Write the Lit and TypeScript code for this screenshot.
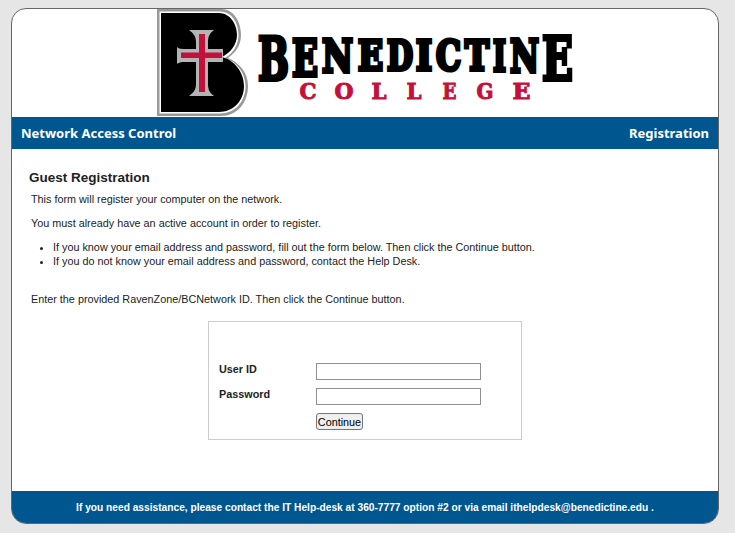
import { LitElement, html, css, svg } from "lit";
import { customElement } from "lit/decorators.js";

const BIG: [string, number, number, number, number][] = [
  ["B", 258, 33, 35, 82],
  ["E", 292, 28, 37, 78],
  ["N", 322, 33, 37, 74],
  ["E", 358, 27, 38, 72],
  ["D", 387, 28, 38, 72],
  ["I", 416, 18, 38, 72],
  ["C", 436, 27, 38, 72],
  ["T", 465, 26, 38, 72],
  ["I", 493, 15, 38, 73],
  ["N", 510, 31, 37, 74],
  ["E", 542, 33, 34, 82],
];
const SMALL: [string, number, number][] = [
  ["C", 300, 18],
  ["O", 335, 20],
  ["L", 372, 16],
  ["L", 407, 16],
  ["E", 443, 15],
  ["G", 477, 18],
  ["E", 513, 19],
];
const CAP = 0.729;

const bPath =
  "M158 9H222C235 9 242 22 242 35C242 46 236 53 229 58C241 63 249 73 249 86C249 103 238 116 222 116H158Z";
const bInner =
  "M160.500 11.500H221C233 11.500 239.500 23 239.500 35C239.500 46 233 54 226 58C238 62 246.500 73 246.500 86C246.500 102 236 113.500 221 113.500H160.500Z";
const bBlack =
  "M162 13H220C231 13 238 24 238 35C238 45 231 53 223 57C235 60 245 72 245 86C245 101 234 112 220 112H162Z";
const cross =
  "M190 30H215C211 33 209 36 209 42V49H224V62H209V84C209 90 211 93 215 96H190C194 93 197 90 197 84V62H184C181 62 179 63 178 64V47C179 48 181 49 184 49H197V42C197 36 194 33 190 30Z";

@customElement("app-root")
export class AppRoot extends LitElement {
  static styles = css`
    :host {
      display: block;
      height: 533px;
      box-sizing: border-box;
      padding: 8px 16px 9px 11px;
      background: #e6e6e6;
      font-family: "Liberation Sans", Arial, sans-serif;
      font-size: 10.820px;
      color: #222;
    }
    .card {
      height: 100%;
      box-sizing: border-box;
      display: flex;
      flex-direction: column;
      background: #fff;
      border: 1px solid #666;
      border-radius: 15px;
      overflow: hidden;
    }
    .logo {
      height: 108px;
      display: flex;
      justify-content: center;
      flex: none;
    }
    .logo svg {
      display: block;
    }
    .bar {
      flex: none;
      height: 32px;
      background: #00568f;
      color: #fff;
      display: flex;
      justify-content: space-between;
      align-items: center;
      padding: 0 9px;
      font-family: "Noto Sans", sans-serif;
      font-weight: 700;
      font-size: 13px;
    }
    main {
      flex: 1;
      padding: 20px 18px 0 16px;
    }
    h1 {
      margin: 0 0 6px 1px;
      font-size: 13.500px;
      line-height: 17px;
      font-weight: 700;
      color: #222;
    }
    p {
      margin: 0 0 10px 3px;
      line-height: 14px;
      white-space: nowrap;
    }
    ul {
      margin: 0 0 24px;
      padding: 0 0 0 25px;
      line-height: 14px;
      white-space: nowrap;
    }
    .box {
      margin: 15px 0 0 180px;
      width: 314px;
      height: 119px;
      box-sizing: border-box;
      border: 1px solid #ccc;
      padding: 41px 0 0 10px;
      display: grid;
      grid-template-columns: 97px 165px;
      grid-auto-rows: 25px;
      font-weight: 700;
    }
    label {
      line-height: 12px;
    }
    input {
      box-sizing: border-box;
      width: 165px;
      height: 17px;
      margin: 0;
      padding: 0 2px;
      border: 1px solid #8f8f8f;
      border-radius: 0;
      background: #fff;
    }
    button {
      grid-column: 2;
      justify-self: start;
      width: 47px;
      height: 17px;
      padding: 0;
      border: 1px solid #767676;
      border-radius: 3px;
      background: #efefef;
      color: #000;
      font: 10.820px "Liberation Sans", Arial, sans-serif;
    }
    footer {
      flex: none;
      height: 32px;
      background: #00568f;
      color: #fff;
      display: flex;
      align-items: center;
      justify-content: center;
      font-weight: 700;
      font-size: 10.200px;
      white-space: pre;
    }
    .big {
      font-family: "DejaVu Serif", serif;
      font-weight: 700;
      fill: #000;
      stroke: #000;
      stroke-width: 4px;
      stroke-linejoin: miter;
    }
    .small {
      font-family: "DejaVu Serif", serif;
      font-weight: 700;
      fill: #c4103a;
      stroke: #c4103a;
      stroke-width: 1px;
    }
  `;

  private logo() {
    return html`<svg width="416" height="108" viewBox="158 9 416 108" role="img" aria-label="Benedictine College logo">
      <path d=${bPath} fill="#999" />
      <path d=${bInner} fill="#fff" />
      <path d=${bBlack} fill="#000" />
      <path d=${cross} fill="#b4b4b4" />
      <rect x="200" y="34" width="6" height="58" fill="#c4103a" />
      <rect x="182" y="52.500" width="41" height="5.500" fill="#c4103a" />
      ${BIG.map(
        ([c, x, w, top, bot]) => svg`<text class="big" x=${x + 1} y=${bot - 2}
          font-size=${(bot - top - 4) / CAP} textLength=${w - 2} lengthAdjust="spacingAndGlyphs">${c}</text>`
      )}
      ${SMALL.map(
        ([c, x, w]) => svg`<text class="small" x=${x + 0.5} y="98.500"
          font-size=${16 / CAP} textLength=${w - 1} lengthAdjust="spacingAndGlyphs">${c}</text>`
      )}
    </svg>`;
  }

  render() {
    return html`<div class="card">
      <div class="logo">${this.logo()}</div>
      <div class="bar"><span>Network Access Control</span><span>Registration</span></div>
      <main>
        <h1>Guest Registration</h1>
        <p>This form will register your computer on the network.</p>
        <p>You must already have an active account in order to register.</p>
        <ul>
          <li>If you know your email address and password, fill out the form below. Then click the Continue button.</li>
          <li>If you do not know your email address and password, contact the Help Desk.</li>
        </ul>
        <p>Enter the provided RavenZone/BCNetwork ID. Then click the Continue button.</p>
        <div class="box">
          <label for="u">User ID</label><input id="u" type="text" />
          <label for="p">Password</label><input id="p" type="password" />
          <button type="button">Continue</button>
        </div>
      </main>
      <footer>If you need assistance, please contact the IT Help-desk at 360-7777 option #2 or via email ithelpdesk@benedictine.edu .</footer>
    </div>`;
  }
}
